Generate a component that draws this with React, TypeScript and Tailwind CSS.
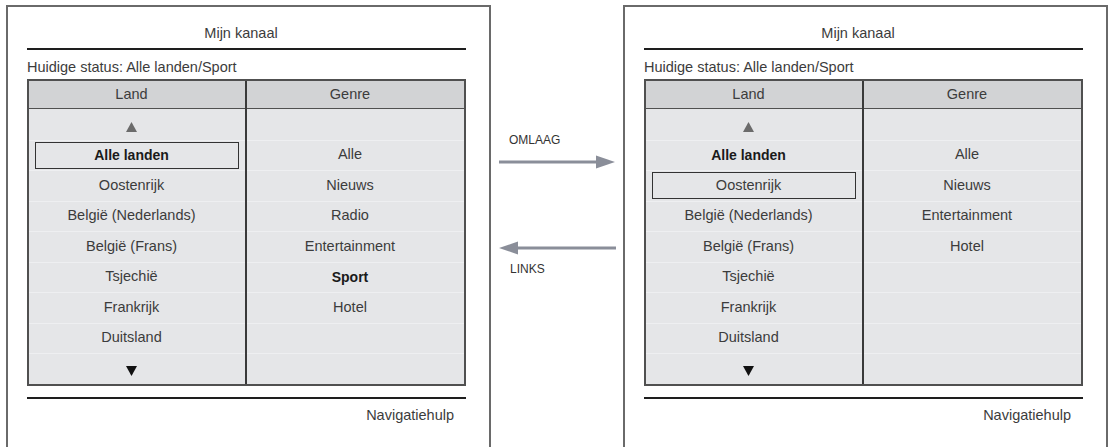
const countries = [
  'Alle landen',
  'Oostenrijk',
  'België (Nederlands)',
  'België (Frans)',
  'Tsjechië',
  'Frankrijk',
  'Duitsland',
];

interface PanelProps {
  genres: string[];
  boldGenre?: string;
  boxedCountry: string;
}

function UpTriangle() {
  return (
    <svg width="11" height="10" viewBox="0 0 11 10">
      <polygon points="5.5,0 11,10 0,10" fill="#6b6b6b" />
    </svg>
  );
}

function DownTriangle() {
  return (
    <svg width="11" height="10" viewBox="0 0 11 10">
      <polygon points="0,0 11,0 5.5,10" fill="#111" />
    </svg>
  );
}

function Row({ children, first }: { children?: React.ReactNode; first?: boolean }) {
  return (
    <div
      className={`h-[30.5px] flex items-center justify-center pr-[11px] ${
        first ? '' : 'border-t border-[#eeeff1]'
      }`}
    >
      {children}
    </div>
  );
}

function Panel({ genres, boldGenre, boxedCountry }: PanelProps) {
  return (
    <div className="mt-[5px] w-[485px] h-[460px] shrink-0 border-2 border-b-0 border-[#6a6a6a] pl-[19px]">
      <div className="w-[439px]">
        <div className="h-[41px] pt-[12px] leading-[28px] text-center pr-[11px]">Mijn kanaal</div>
        <div className="h-[2px] bg-[#1e1e1e]" />
        <div className="mt-[7px] leading-[20px]">Huidige status: Alle landen/Sport</div>
        <div className="mt-[2px] flex border-2 border-[#505050]">
          <div className="w-[218px] border-r-2 border-[#3a3a3a]">
            <div className="h-[28px] bg-[#d2d3d5] border-b border-[#505050] flex items-center justify-center pr-[11px]">
              Land
            </div>
            <div className="bg-[#e5e6e8]">
              <Row first>
                <div className="pt-[5px]">
                  <UpTriangle />
                </div>
              </Row>
              {countries.map((c) => {
                const bold = c === 'Alle landen';
                const text = (
                  <span className={bold ? 'font-bold text-[14px] text-[#1a1a1a]' : ''}>{c}</span>
                );
                if (c === boxedCountry) {
                  return (
                    <div key={c} className="h-[30.5px] flex items-center px-[6px] border-t border-[#eeeff1]">
                      <div className="h-[27px] w-full border border-[#333] flex items-center justify-center pr-[11px]">
                        {text}
                      </div>
                    </div>
                  );
                }
                return <Row key={c}>{text}</Row>;
              })}
              <Row>
                <div className="pt-[5px]">
                  <DownTriangle />
                </div>
              </Row>
            </div>
          </div>
          <div className="flex-1">
            <div className="h-[28px] bg-[#d2d3d5] border-b border-[#505050] flex items-center justify-center pr-[11px]">
              Genre
            </div>
            <div className="bg-[#e5e6e8]">
              <Row first />
              {Array.from({ length: 8 }).map((_, i) => {
                const g = genres[i];
                return (
                  <Row key={i}>
                    {g && (
                      <span className={g === boldGenre ? 'font-bold text-[14px] text-[#1a1a1a]' : ''}>
                        {g}
                      </span>
                    )}
                  </Row>
                );
              })}
            </div>
          </div>
        </div>
        <div className="mt-[11px] h-[2px] bg-[#1e1e1e]" />
        <div className="mt-[6px] leading-[20px] text-right pr-[12px]">Navigatiehulp</div>
      </div>
    </div>
  );
}

export default function App() {
  return (
    <div
      className="w-[1110px] h-[447px] overflow-hidden bg-white flex text-[14.5px] text-[#3c3c3c]"
      style={{ fontFamily: '"Liberation Sans", Arial, sans-serif' }}
    >
      <div className="ml-[6px]">
        <Panel
          genres={['Alle', 'Nieuws', 'Radio', 'Entertainment', 'Sport', 'Hotel']}
          boldGenre="Sport"
          boxedCountry="Alle landen"
        />
      </div>
      <div className="w-[132px] shrink-0 pl-[8px] text-[12px] text-[#333]">
        <div className="mt-[133px] leading-[14px] pl-[10px]">OMLAAG</div>
        <svg className="mt-[8px] block" width="116" height="14" viewBox="0 0 116 14">
          <rect x="0" y="5.5" width="98" height="3" fill="#8a8e99" />
          <polygon points="97,0.5 116,7 97,13.5" fill="#8a8e99" />
        </svg>
        <svg className="mt-[72px] block" width="117" height="14" viewBox="0 0 117 14">
          <rect x="18" y="5.5" width="99" height="3" fill="#8a8e99" />
          <polygon points="19,0.5 0,7 19,13.5" fill="#8a8e99" />
        </svg>
        <div className="mt-[7px] leading-[14px] pl-[11px]">LINKS</div>
      </div>
      <Panel
        genres={['Alle', 'Nieuws', 'Entertainment', 'Hotel']}
        boxedCountry="Oostenrijk"
      />
    </div>
  );
}
